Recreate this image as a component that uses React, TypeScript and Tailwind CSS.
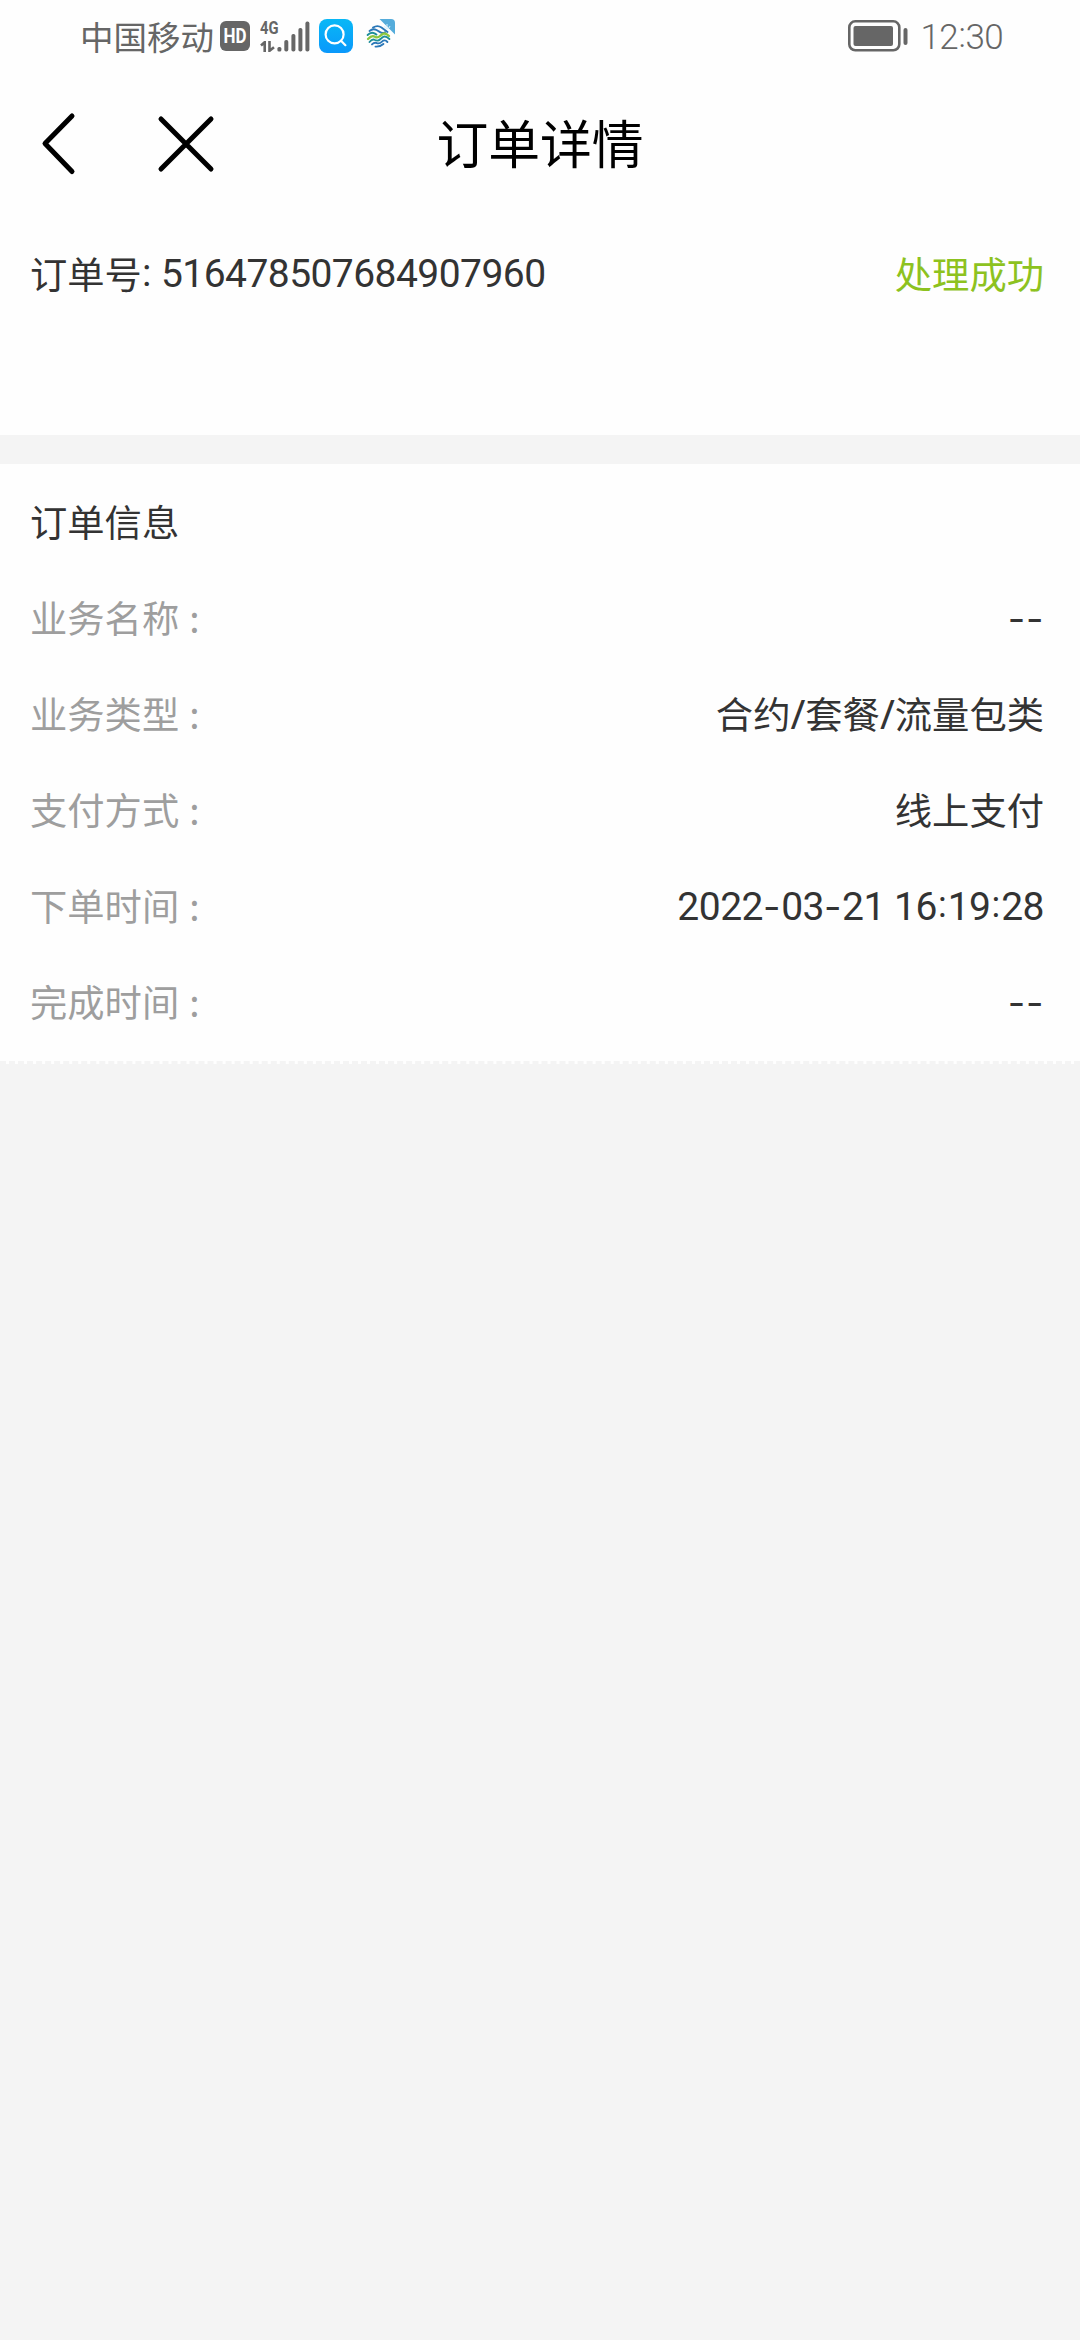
import React from "react";

const cjk = "font-['Noto_Sans_CJK_SC',sans-serif]";

// Widths of the separators differ from the digits' own font.
function Latin({ text }: { text: string }) {
  return (
    <span className="inline-block pt-[3px] font-['Roboto','Noto_Sans_CJK_SC',sans-serif] text-[39px] tracking-[-0.5px]">
      {text.split(/([-:])/).map((part, i) => {
        if (part === "-") return <span key={i} className="font-['Inter',sans-serif] text-[38px] tracking-[0.6px]">-</span>;
        if (part === ":") return <span key={i} className="inline-block w-[10.7px] -translate-y-[3px] text-center text-[36px] tracking-normal">:</span>;
        return part;
      })}
    </span>
  );
}

function StatusBar() {
  return (
    <div className="flex h-[72px] items-center pl-[80px] pr-[77px] text-[#666]">
      <span className="font-['Noto_Sans_CJK_SC',sans-serif] text-[33.5px] leading-[70px] font-normal whitespace-nowrap">中国移动</span>
      <span className="ml-[6px] flex h-[30px] w-[30px] items-center justify-center rounded-[6px] bg-[#666] font-['Roboto',sans-serif] text-[17px] font-bold leading-none text-white">
        <span className="scale-y-[1.15]">HD</span>
      </span>
      <div className="ml-[10px] flex h-[31px] items-end">
        <div className="flex h-[31px] w-[17px] flex-col justify-between">
          <span className="origin-left scale-x-[0.82] font-['Roboto',sans-serif] text-[18px] font-bold leading-[14px]">4G</span>
          <svg width="17" height="11" viewBox="0 0 17 11" fill="none" stroke="#666" strokeWidth="2.6">
            <path d="M1 4.5 L4.7 1.2 V11 M9.5 0 V9.8 L14 6.2" />
          </svg>
        </div>
        <svg width="33" height="31" viewBox="0 0 33 31" fill="#666">
          <rect x="0.4" y="26" width="4" height="4.6" rx="1.6" />
          <rect x="7.3" y="19" width="4" height="11.6" rx="1.8" />
          <rect x="14.4" y="13" width="4" height="17.6" rx="1.8" />
          <rect x="21.4" y="7" width="4" height="23.6" rx="1.8" />
          <rect x="28.4" y="0.6" width="4" height="30" rx="1.8" />
        </svg>
      </div>
      <svg className="ml-[9px]" width="34" height="34" viewBox="0 0 34 34">
        <defs>
          <linearGradient id="search" x1="0" y1="0" x2="0" y2="1">
            <stop offset="0" stopColor="#08b8f6" />
            <stop offset="1" stopColor="#0a98fb" />
          </linearGradient>
        </defs>
        <rect width="34" height="34" rx="8" fill="url(#search)" />
        <g fill="none" stroke="#fff" strokeWidth="2.2" strokeLinecap="round">
          <circle cx="15.6" cy="15.4" r="9" />
          <path d="M22 21.8 L26.4 26.2" />
        </g>
      </svg>
      <svg className="ml-[12px]" width="32" height="34" viewBox="0 0 32 34">
        <path d="M14.5 0 H26 Q30 0 30 4 V15.5 Z" fill="#55acdb" />
        <path d="M22 5 V10 M19.5 7 Q20 9.5 22 10 Q24.5 9.5 25 7" fill="none" stroke="#d8effa" strokeWidth="1" />
        <g fill="none" strokeWidth="1.9" strokeLinecap="round" strokeLinejoin="round">
          <path d="M8 8.6 Q12.5 5.6 16.5 8.6 L22.5 13" stroke="#2b78b8" />
          <path d="M4.5 12 Q8 9 11.5 11 L15.5 13.4 Q18 14.6 20 13.2" stroke="#2b78b8" />
          <path d="M2.6 16 Q6 12.6 9.5 14.4 L11.5 15.6" stroke="#1f8f9a" />
          <path d="M3 20 Q7 15.6 10 17.8 Q12.5 19.4 15 17 L18 14.8 Q20.5 13.6 24 17" stroke="#8cc63f" strokeWidth="2.3" />
          <path d="M4.5 23 Q7.5 19.4 10 21 Q13 22.6 15.5 20 L18 18 Q20.5 16.4 24.4 20" stroke="#1f8f9a" />
          <path d="M7 25.4 Q9.5 23 12 24.2 Q14.5 25 17 22.6 Q19.6 20 22.4 23" stroke="#2b78b8" />
          <path d="M10.5 27.6 Q15 28 18.4 25" stroke="#2b78b8" />
        </g>
      </svg>
      <svg className="ml-auto" width="60" height="32" viewBox="0 0 60 32">
        <rect x="1.3" y="1.3" width="50" height="29" rx="6" fill="none" stroke="#666" strokeWidth="2.6" />
        <rect x="5.5" y="6" width="39.5" height="20" rx="2" fill="#666" />
        <rect x="55.5" y="8" width="4" height="17" rx="2" fill="#666" />
      </svg>
      <span className="ml-[12px] pt-[3px] font-['Roboto',sans-serif] text-[35px] font-[350] leading-[69px] tracking-[-0.7px] whitespace-nowrap">
        12<span className="inline-block -translate-y-[2px] px-[0.5px]">:</span>30
      </span>
    </div>
  );
}

function NavBar() {
  return (
    <header className="grid h-[144px] grid-cols-[1fr_auto_1fr] items-center">
      <svg width="240" height="64" viewBox="0 0 240 64" fill="none" stroke="#000" strokeWidth="5" strokeLinecap="round" strokeLinejoin="round">
        <path d="M72 4 L45 31.5 L72 59.5" />
        <path d="M161 7 L211 57 M211 7 L161 57" />
      </svg>
      <h1 className="pb-[5px] font-['Noto_Sans_CJK_SC',sans-serif] text-[51.8px] font-normal leading-[76px] text-black">订单详情</h1>
    </header>
  );
}

const rows = [
  { label: "业务名称", value: "--", latin: true },
  { label: "业务类型", value: "合约/套餐/流量包类", latin: false },
  { label: "支付方式", value: "线上支付", latin: false },
  { label: "下单时间", value: "2022-03-21 16:19:28", latin: true },
  { label: "完成时间", value: "--", latin: true },
];

function Chinese({ text }: { text: string }) {
  return (
    <span>
      {text.split(/(\/)/).map((part, i) =>
        part === "/" ? <span key={i} className="font-['Noto_Sans',sans-serif] text-[40px] leading-none">/</span> : part
      )}
    </span>
  );
}

export default function App() {
  return (
    <div className={`${cjk} flex min-h-[2340px] w-[1080px] flex-col bg-[#f4f4f4] text-[37.3px] text-[#333]`}>
      <div className="h-[435px] bg-[#fefefe]">
        <StatusBar />
        <NavBar />
        <div className="flex h-[115px] items-center justify-between pl-[30px] pr-[36px]">
          <div className="flex items-center whitespace-nowrap">
            <span>订单号</span>
            <span className="whitespace-pre pt-[2px] font-['Roboto','Noto_Sans_CJK_SC',sans-serif] text-[39px] tracking-[-0.55px]">
              <span className="inline-block -translate-y-[1px] pr-[1px]">:</span> 516478507684907960
            </span>
          </div>
          <span className="text-[#8dc21f]">处理成功</span>
        </div>
      </div>
      <section className="mt-[29px] border-b-[3px] border-dashed border-[#f4f4f4] bg-[#fefefe] pb-[12px] pl-[30px] pr-[36px] pt-[9px]">
        <h2 className="h-24 font-normal leading-24">订单信息</h2>
        {rows.map((r) => (
          <div key={r.label} className="flex h-24 items-center justify-between leading-24 whitespace-nowrap">
            <span className="text-[#9e9e9e]">
              {r.label}
              <span className="ml-[10px]">:</span>
            </span>
            {r.latin ? <Latin text={r.value} /> : <Chinese text={r.value} />}
          </div>
        ))}
      </section>
    </div>
  );
}
